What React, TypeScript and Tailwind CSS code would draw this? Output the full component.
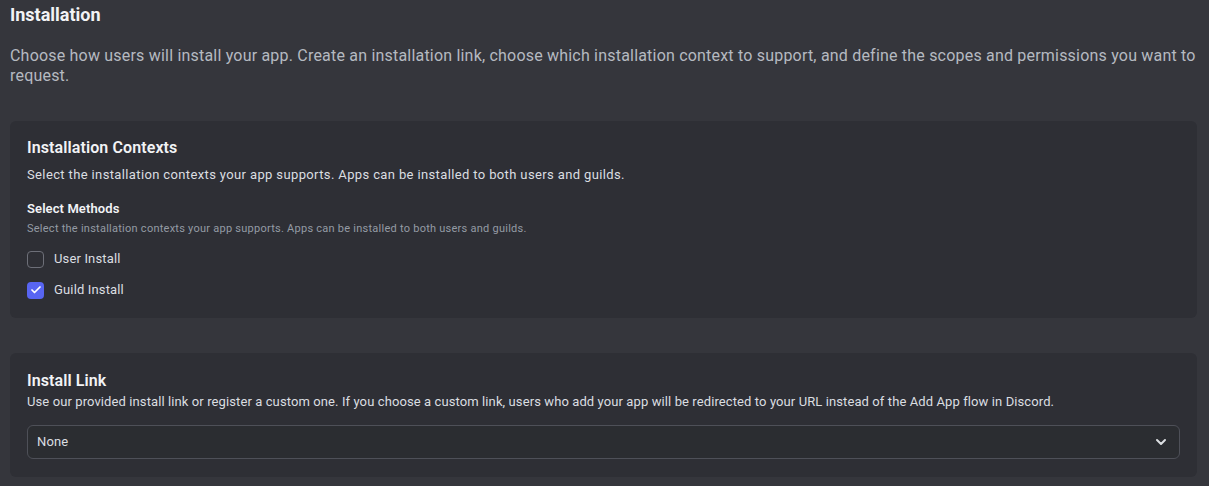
import { Check, ChevronDown } from "lucide-react";

function Checkbox({ checked, label }: { checked?: boolean; label: string }) {
  return (
    <label className="flex h-[18px] items-center gap-[10px]">
      {checked ? (
        <span className="flex h-[17px] w-[17px] items-center justify-center rounded-[4px] bg-[#5865f2]">
          <Check className="h-3 w-3 text-white" strokeWidth={3.5} />
        </span>
      ) : (
        <span className="h-[17px] w-[17px] rounded-[4px] border border-[#6d6f78]" />
      )}
      <span className="text-[13px] leading-[18px] tracking-[0.15px] text-[#dbdee1]">{label}</span>
    </label>
  );
}

function Card({ children, className = "" }: { children: React.ReactNode; className?: string }) {
  return <section className={`rounded-md bg-[#2e2f35] ${className}`}>{children}</section>;
}

export default function App() {
  return (
    <div className="h-[486px] w-full overflow-hidden bg-[#35363c] pl-[10px] pr-[12px] font-['Roboto',sans-serif]">
      <h1 className="pt-[2px] text-[18px] font-bold leading-[26px] text-[#f2f3f5]">Installation</h1>
      <p className="mt-[18px] text-[16px] leading-[20px] tracking-[0.2px] text-[#b5bac1]">
        Choose how users will install your app. Create an installation link, choose which installation context to
        support, and define the scopes and permissions you want to request.
      </p>

      <Card className="mt-[35px] h-[197px] px-[17px] pt-[17px]">
        <h2 className="text-[16px] font-semibold leading-[20px] tracking-[0.1px] text-[#f2f3f5]">Installation Contexts</h2>
        <p className="mt-[8px] text-[13px] leading-[18px] tracking-[0.37px] text-[#dbdee1]">
          Select the installation contexts your app supports. Apps can be installed to both users and guilds.
        </p>
        <h3 className="mt-[16px] text-[13px] font-semibold leading-[18px] tracking-[0.1px] text-[#f2f3f5]">Select Methods</h3>
        <p className="mt-[3px] text-[11px] leading-[16px] tracking-[0.25px] text-[#949ba4]">
          Select the installation contexts your app supports. Apps can be installed to both users and guilds.
        </p>
        <div className="mt-[13px] flex flex-col gap-[13px]">
          <Checkbox label="User Install" />
          <Checkbox checked label="Guild Install" />
        </div>
      </Card>

      <Card className="mt-[35px] h-[124px] px-[17px] pt-[18px]">
        <h2 className="text-[16px] font-semibold leading-[20px] tracking-[0.1px] text-[#f2f3f5]">Install Link</h2>
        <p className="mt-[2px] text-[13px] leading-[18px] tracking-[0.1px] text-[#dbdee1]">
          Use our provided install link or register a custom one. If you choose a custom link, users who add your app
          will be redirected to your URL instead of the Add App flow in Discord.
        </p>
        <div className="mt-[14px] flex h-[34px] items-center justify-between rounded-[6px] border border-[#4e5058] bg-[#2b2d31] pl-[9px] pr-[10px]">
          <span className="text-[13px] tracking-[0.15px] text-[#dbdee1]">None</span>
          <ChevronDown className="h-[16px] w-[16px] text-[#dbdee1]" strokeWidth={3} />
        </div>
      </Card>
    </div>
  );
}
